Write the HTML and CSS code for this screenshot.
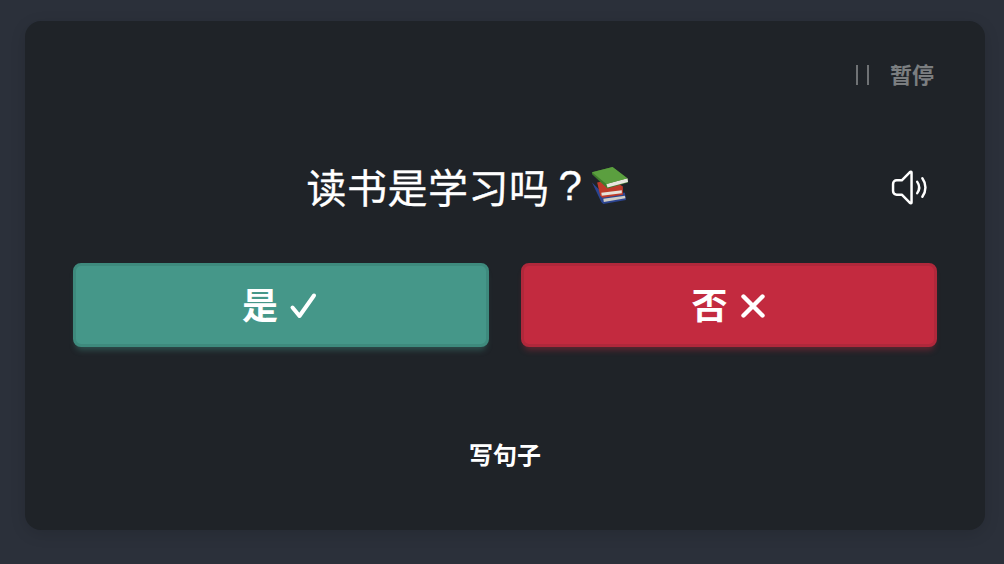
FILE: index.html
```html
<!DOCTYPE html>
<html lang="zh-CN">
<head>
<meta charset="utf-8">
<title>读书是学习吗?</title>
<link rel="stylesheet" href="styles.css">
</head>
<body>
<main class="card">
  <div class="top">
    <button class="pause">
      <span class="pause-bars"><i></i><i></i></span>
      <span class="pause-label">暂停</span>
    </button>
  </div>
  <div class="question">
    <h1 class="q-text">读书是学习吗<span class="q-mark">?</span><svg class="books" viewBox="0 0 36 36" width="37" height="37" aria-hidden="true">
      <path d="M1 15 L10 34 L12 36 L34 32 L33 25 L10 24 Z" fill="#2b4490"/>
      <path d="M12 31 L33 28 L33.500 30.500 L12.500 34 Z" fill="#cfccc6"/>
      <path d="M6 15 L9 28 L11 30 L31 27 L31 19 L20 12 Z" fill="#bf3b2a"/>
      <path d="M10 25 L30 22.500 L30 25.500 L10.500 28 Z" fill="#e6e2da"/>
      <path d="M1 5 L21 0 L36 12 L36 15 L16 21 L1 7 Z" fill="#3f7d2c"/>
      <path d="M15 16.500 L35.500 11 L36 14.500 L16 20 Z" fill="#e9e6dd"/>
      <path d="M1 5 L21 0 L35.500 11 L15 16.500 Z" fill="#5b9f3f"/>
    </svg></h1>
    <div class="speaker-box">
      <svg viewBox="0 0 36 36" width="37" height="37" fill="none" stroke="#fff" stroke-width="2.400" stroke-linecap="round" stroke-linejoin="round" aria-hidden="true">
        <path d="M20 3.500 V32.500 C20 33.500 19 33.500 18.200 32.800 L10.500 25 H5.500 C3.500 25 2 23.500 2 21.500 V14.500 C2 12.500 3.500 11 5.500 11 H10.500 L18.200 3.200 C19 2.500 20 2.500 20 3.500 Z"/>
        <path d="M25.500 12.500 C28 16 28 20 25.500 23.500"/>
        <path d="M30.500 9 C34.500 14.500 34.500 21.500 30.500 27"/>
      </svg>
    </div>
  </div>
  <div class="answers">
    <button class="answer yes"><span class="answer-label">是</span><svg viewBox="0 0 28 28" width="28" height="28" fill="none" stroke="#fff" stroke-width="4" stroke-linecap="round" stroke-linejoin="round" aria-hidden="true"><path d="M3.500 15.500 L10.500 24 L25 3.500"/></svg></button>
    <button class="answer no"><span class="answer-label">否</span><svg viewBox="0 0 28 28" width="28" height="28" fill="none" stroke="#fff" stroke-width="4.400" stroke-linecap="round" aria-hidden="true"><path d="M4.500 4.500 L23.500 23.500 M23.500 4.500 L4.500 23.500"/></svg></button>
  </div>
  <button class="write">写句子</button>
</main>
</body>
</html>
```
FILE: styles.css
```css
* { box-sizing: border-box; }
html, body { height: 100%; }
body {
  margin: 0;
  padding: 21px 19px 34px 25px;
  background: #2b303a;
  font-family: "Noto Sans CJK SC", "Noto Sans", sans-serif;
  color: #fff;
  overflow: hidden;
}
button {
  font: inherit;
  color: inherit;
  background: none;
  border: 0;
  padding: 0;
}
.card {
  height: 509px;
  padding: 38px 48px 0;
  background: #1f2328;
  border-radius: 16px;
  box-shadow: 0 4px 16px rgba(0, 0, 0, 0.12);
  display: flex;
  flex-direction: column;
}
.top {
  display: flex;
  justify-content: flex-end;
  height: 32px;
  padding-right: 3px;
}
.pause {
  display: flex;
  align-items: center;
  gap: 21px;
  height: 32px;
  font-size: 22px;
  line-height: 32px;
  font-weight: 700;
  color: #7b7e80;
}
.pause-label { margin-top: -4px; }
.pause-bars { display: flex; gap: 9px; }
.pause-bars i { width: 2px; height: 20px; background: #6f7275; }
.question {
  margin-top: 66px;
  height: 60px;
  display: flex;
  align-items: center;
}
.q-text {
  flex: 1;
  margin: -2px 0 0;
  display: flex;
  align-items: center;
  justify-content: center;
  font-size: 40px;
  line-height: 60px;
  font-weight: 400;
  letter-spacing: 0.5px;
  -webkit-text-stroke: 0.3px #fff;
}
.q-mark {
  width: 42px;
  text-align: center;
  font-family: "Liberation Sans", sans-serif;
  font-size: 42px;
}
.books { margin-left: -1px; margin-top: -1px; }
.speaker-box {
  flex: none;
  width: 76px;
  padding-right: 9px;
  display: flex;
  justify-content: flex-end;
}
.answers {
  margin-top: 46px;
  display: grid;
  grid-template-columns: 1fr 1fr;
  gap: 32px;
}
.answer {
  height: 84px;
  display: flex;
  align-items: center;
  justify-content: center;
  gap: 11px;
  font-size: 36px;
  font-weight: 700;
  border-radius: 8px;
  border: 3px solid;
}
.answer-label { margin-top: -4px; }
.answer svg { flex: none; margin-top: 1px; }
.yes {
  padding-right: 3px;
  background: #459789;
  border-color: #3e8a7d;
  box-shadow: 0 6px 6px -3px rgba(69, 151, 137, 0.4);
}
.no {
  background: #c32a3f;
  border-color: #b0283b;
  box-shadow: 0 6px 6px -3px rgba(195, 42, 63, 0.4);
}
.write {
  margin-top: 89px;
  align-self: center;
  font-size: 24px;
  line-height: 36px;
  font-weight: 700;
}
```
